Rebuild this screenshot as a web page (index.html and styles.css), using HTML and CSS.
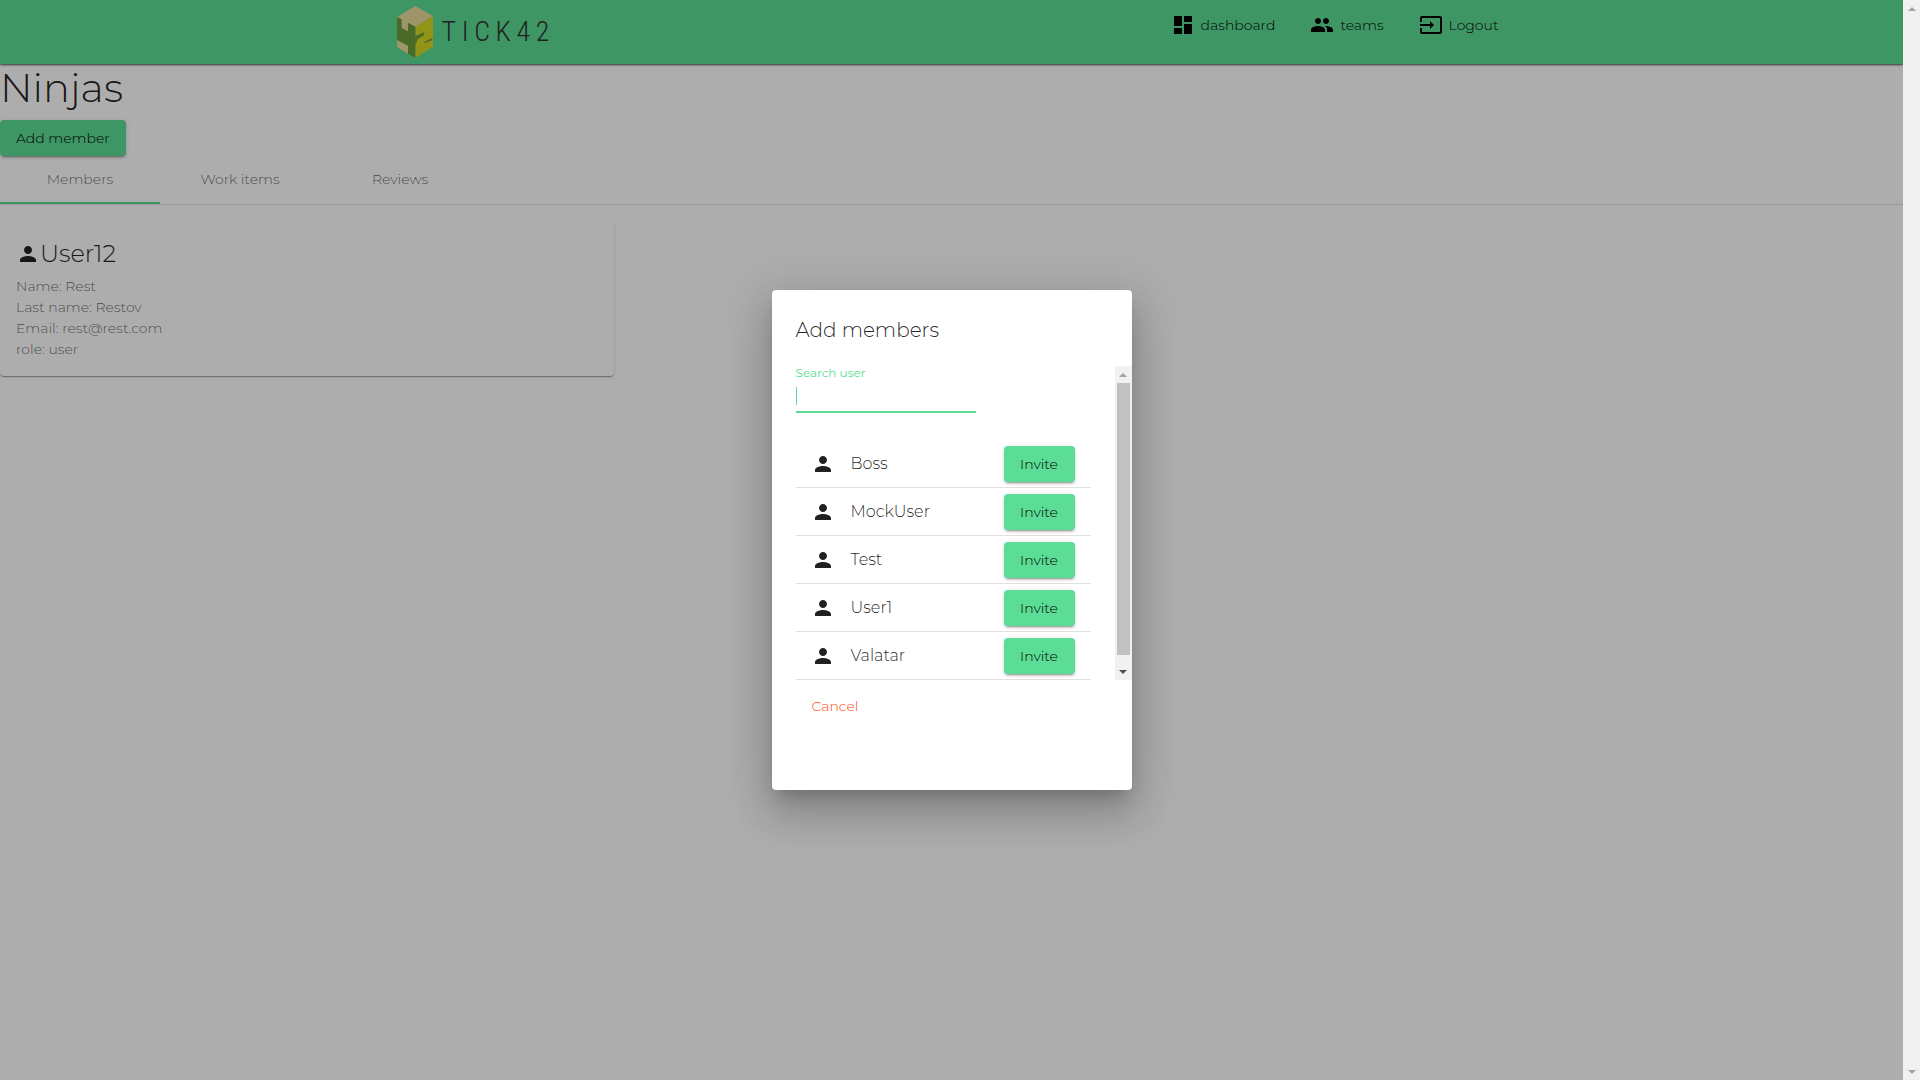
FILE: index.html
```html
<!DOCTYPE html>
<html lang="en">
<head>
<meta charset="utf-8">
<title>Ninjas</title>
<link rel="stylesheet" href="styles.css">
</head>
<body>
<svg class="sprite" aria-hidden="true">
  <symbol id="person" viewBox="0 0 24 24"><path d="M12 12c2.21 0 4-1.79 4-4s-1.79-4-4-4-4 1.79-4 4 1.79 4 4 4zm0 2c-2.67 0-8 1.34-8 4v2h16v-2c0-2.660-5.330-4-8-4z"/></symbol>
</svg>
<div class="viewport">
  <div class="app">
    <header class="topbar">
      <div class="container">
        <a class="brand" href="#" aria-label="Tick42">
          <svg class="cube" viewBox="0 0 108 156">
            <path fill="#e9dc9c" d="M55 0l53 30-53 32L0 33z"/>
            <path fill="#d6da22" d="M55 62l53-32v92l-53 34z"/>
            <path fill="#6d9e3a" d="M0 33l55 29v94L0 124z"/>
            <path fill="#e9dc9c" d="M14 40l19-9v45L14 66zM0 102l33 17v25L0 124z"/>
            <path fill="#6d9e3a" d="M55 90l26-11v9L62 99l-7 20zM82 108l24-12v6l-12 5-11 4z"/>
          </svg>
          <span class="wordmark"><span>T</span><span>I</span><span>C</span><span>K</span><span>4</span><span>2</span></span>
        </a>
        <nav class="nav">
          <a href="#"><svg class="icon" viewBox="0 0 24 24"><path d="M3 13h8V3H3v10zm0 8h8v-6H3v6zm10 0h8V11h-8v10zm0-18v6h8V3h-8z"/></svg>dashboard</a>
          <a href="#"><svg class="icon" viewBox="0 0 24 24"><path d="M16 11c1.660 0 2.990-1.340 2.990-3S17.660 5 16 5c-1.660 0-3 1.340-3 3s1.340 3 3 3zm-8 0c1.660 0 2.990-1.340 2.990-3S9.660 5 8 5C6.340 5 5 6.340 5 8s1.340 3 3 3zm0 2c-2.330 0-7 1.170-7 3.500V19h14v-2.500c0-2.330-4.670-3.500-7-3.500zm8 0c-.29 0-.62.02-.97.05 1.160.84 1.970 1.970 1.970 3.450V19h6v-2.500c0-2.330-4.670-3.500-7-3.500z"/></svg>teams</a>
          <a href="#"><svg class="icon" viewBox="0 0 24 24"><path d="M21 3.010H3c-1.100 0-2 .9-2 2V9h2V4.990h18v14.030H3V15H1v4.010c0 1.100.9 1.980 2 1.980h18c1.100 0 2-.88 2-1.980v-14c0-1.110-.9-2-2-2zM11 16l4-4-4-4v3H1v2h10v3z"/></svg>Logout</a>
        </nav>
      </div>
    </header>
    <main>
      <h1>Ninjas</h1>
      <button class="btn" type="button">Add member</button>
      <div class="tabs" role="tablist">
        <button class="tab active" type="button" role="tab" aria-selected="true">Members</button>
        <button class="tab" type="button" role="tab" aria-selected="false">Work items</button>
        <button class="tab" type="button" role="tab" aria-selected="false">Reviews</button>
      </div>
      <div class="cards">
        <article class="card">
          <h2><svg class="icon" aria-hidden="true"><use href="#person"/></svg>User12</h2>
          <p>Name: Rest</p>
          <p>Last name: Restov</p>
          <p>Email: rest@rest.com</p>
          <p>role: user</p>
        </article>
      </div>
    </main>
    <div class="backdrop">
      <section class="dialog" role="dialog" aria-labelledby="dialog-title">
        <h2 id="dialog-title">Add members</h2>
        <div class="dialog-body">
          <div class="dialog-content">
            <div class="field">
              <label for="search">Search user</label>
              <input id="search" type="text">
            </div>
            <ul class="users">
              <li><svg class="icon" aria-hidden="true"><use href="#person"/></svg><span>Boss</span><button class="btn" type="button">Invite</button></li>
              <li><svg class="icon" aria-hidden="true"><use href="#person"/></svg><span>MockUser</span><button class="btn" type="button">Invite</button></li>
              <li><svg class="icon" aria-hidden="true"><use href="#person"/></svg><span>Test</span><button class="btn" type="button">Invite</button></li>
              <li><svg class="icon" aria-hidden="true"><use href="#person"/></svg><span>User1</span><button class="btn" type="button">Invite</button></li>
              <li><svg class="icon" aria-hidden="true"><use href="#person"/></svg><span>Valatar</span><button class="btn" type="button">Invite</button></li>
            </ul>
          </div>
          <div class="scrollbar">
            <span class="arrow up"></span>
            <span class="track"><span class="thumb"></span></span>
            <span class="arrow down enabled"></span>
          </div>
        </div>
        <button class="cancel" type="button">Cancel</button>
      </section>
    </div>
  </div>
  <div class="scrollbar">
    <span class="arrow up"></span>
    <span class="track"></span>
    <span class="arrow down"></span>
  </div>
</div>
</body>
</html>
```
FILE: styles.css
```css
:root {
  --green: #5cdd95;
  --ink: rgba(0, 0, 0, 0.87);
  --lift: 0 3px 1px -2px rgba(0, 0, 0, 0.2), 0 2px 2px 0 rgba(0, 0, 0, 0.14), 0 1px 5px 0 rgba(0, 0, 0, 0.12);
}

* {
  box-sizing: border-box;
}

body,
h1,
h2,
p,
ul {
  margin: 0;
  padding: 0;
  font-weight: 300;
}

body,
button,
input {
  font-family: Montserrat, Inter, "Open Sans", sans-serif;
  font-size: 14px;
  font-weight: 300;
}

body {
  color: var(--ink);
  background: #fff;
}

.sprite {
  position: absolute;
  width: 0;
  height: 0;
}

.icon {
  width: 24px;
  height: 24px;
  fill: currentColor;
  flex: none;
}

.viewport {
  display: flex;
  height: 100vh;
}

.app {
  position: relative;
  flex: 1;
  min-width: 0;
  overflow: hidden;
}

/* Top bar */
.topbar {
  position: relative;
  height: 64px;
  background: var(--green);
  box-shadow: 0 1px 2px rgba(0, 0, 0, 0.7);
}

.container {
  display: flex;
  justify-content: space-between;
  align-items: flex-start;
  max-width: 1140px;
  margin: 0 auto;
  padding: 0 15px;
}

.brand {
  display: flex;
  align-items: center;
  gap: 9px;
  height: 64px;
  color: #333;
  text-decoration: none;
}

.cube {
  width: 36px;
  height: 52px;
}

.wordmark {
  display: flex;
  justify-content: space-between;
  width: 108px;
  padding-bottom: 2px;
  font-family: "Roboto Condensed", "Liberation Sans Narrow", Roboto, sans-serif;
  font-size: 28px;
  font-weight: 300;
}

.nav {
  display: flex;
  gap: 35px;
  padding: 13px 8px 0 0;
}

.nav a {
  display: flex;
  align-items: center;
  gap: 6px;
  color: #000;
  text-decoration: none;
}

/* Page */
h1 {
  padding-bottom: 8px;
  font-size: 40px;
  line-height: 48px;
}

.btn {
  display: block;
  min-width: 71px;
  height: 36px;
  padding: 0 16px;
  border: 0;
  border-radius: 4px;
  background: var(--green);
  color: #000;
  box-shadow: var(--lift);
}

.tabs {
  display: flex;
  border-bottom: 1px solid rgba(0, 0, 0, 0.12);
}

.tab {
  width: 160px;
  height: 48px;
  border: 0;
  border-bottom: 2px solid transparent;
  background: none;
  color: rgba(0, 0, 0, 0.6);
}

.tab.active {
  border-bottom-color: var(--green);
}

.cards {
  display: grid;
  grid-template-columns: repeat(3, 1fr);
  gap: 30px;
  padding-top: 15px;
}

.card {
  padding: 16px;
  border-radius: 4px;
  color: rgba(0, 0, 0, 0.6);
  line-height: 21px;
  box-shadow: 0 2px 1px -1px rgba(0, 0, 0, 0.2), 0 1px 1px 0 rgba(0, 0, 0, 0.14), 0 1px 3px 0 rgba(0, 0, 0, 0.12);
}

.card h2 {
  display: flex;
  align-items: center;
  padding-bottom: 4px;
  color: var(--ink);
  font-size: 24px;
  line-height: 36px;
}

/* Dialog */
.backdrop {
  position: absolute;
  inset: 0;
  display: flex;
  align-items: center;
  justify-content: center;
  background: rgba(0, 0, 0, 0.32);
}

.dialog {
  width: 360px;
  min-height: 500px;
  padding: 24px 0;
  border-radius: 4px;
  background: #fff;
  box-shadow: 0 11px 15px -7px rgba(0, 0, 0, 0.2), 0 24px 38px 3px rgba(0, 0, 0, 0.14), 0 9px 46px 8px rgba(0, 0, 0, 0.12);
}

.dialog h2 {
  padding: 0 24px 20px;
  font-size: 20px;
  line-height: 32px;
}

.dialog-body {
  display: flex;
}

.dialog-content {
  flex: 1;
  padding: 0 24px;
}

.field {
  display: flex;
  flex-direction: column;
  width: 180px;
  padding-bottom: 27px;
}

.field label {
  color: var(--green);
  font-size: 12px;
  font-weight: 400;
  line-height: 14px;
}

.field input {
  width: 100%;
  height: 33px;
  padding: 0;
  border: 0;
  border-bottom: 2px solid var(--green);
  outline: 0;
  background: linear-gradient(var(--green), var(--green)) 0 7px / 1px 18px no-repeat;
  caret-color: transparent;
}

.users {
  list-style: none;
}

.users li {
  display: flex;
  align-items: center;
  gap: 16px;
  height: 48px;
  padding: 0 16px 0 15px;
  border-bottom: 1px solid rgba(0, 0, 0, 0.12);
  font-size: 16px;
}

.users span {
  flex: 1;
}

.cancel {
  height: 36px;
  margin: 8px 24px 0;
  padding: 0 16px;
  border: 0;
  background: none;
  color: #ff4b14;
}

/* Scrollbars */
.scrollbar {
  display: flex;
  flex-direction: column;
  flex: none;
  width: 17px;
  background: #f1f1f1;
  color: #a3a3a3;
}

.arrow {
  display: flex;
  align-items: center;
  justify-content: center;
  height: 17px;
}

.arrow::before {
  content: "";
  border: 4px solid transparent;
}

.arrow.up::before {
  border-top: 0;
  border-bottom-color: currentColor;
}

.arrow.down::before {
  border-bottom: 0;
  border-top-color: currentColor;
}

.arrow.enabled {
  color: #505050;
}

.track {
  flex: 1;
  padding: 0 2px;
}

.thumb {
  display: block;
  height: 97%;
  background: #c1c1c1;
}
```
